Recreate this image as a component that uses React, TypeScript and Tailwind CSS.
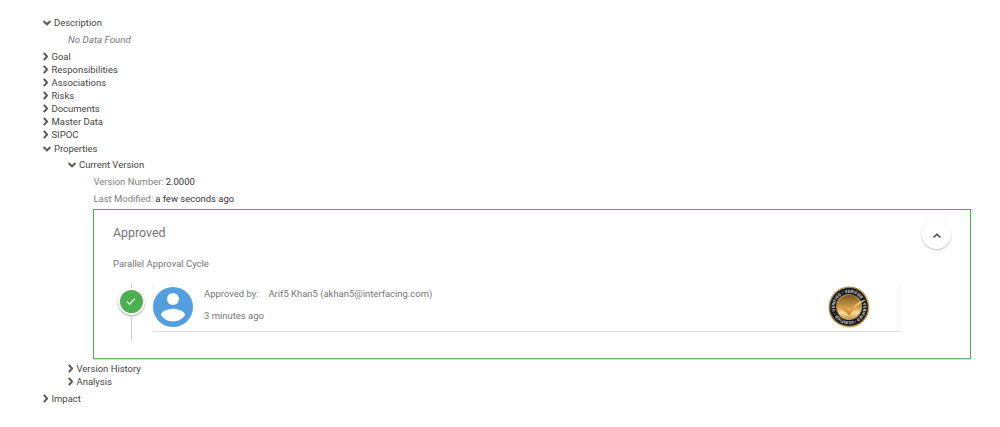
import type { ReactNode } from "react";

function Chevron({ open }: { open?: boolean }) {
  return open ? (
    <svg className="mr-[3.500px] h-[6px] w-[8px] shrink-0" viewBox="0 0 8 6" fill="none" stroke="#5c5c5c" strokeWidth="2">
      <path d="M.5 1.100 4 4.300 7.500 1.100" />
    </svg>
  ) : (
    <svg className="mr-[3.500px] h-[9px] w-[5.500px] shrink-0" viewBox="0 0 5.5 9" fill="none" stroke="#5c5c5c" strokeWidth="2.100">
      <path d="M.8 .9 4.100 4.500 .8 8.100" />
    </svg>
  );
}

function Row({ label, open }: { label: string; open?: boolean }) {
  return (
    <div className="flex h-[13px] items-center whitespace-nowrap text-[#444]">
      <Chevron open={open} />
      {label}
    </div>
  );
}

function Field({ label, children }: { label: string; children: ReactNode }) {
  return (
    <div className="flex h-[17px] items-center gap-[2px] whitespace-nowrap pl-[0.500px] text-[#333]">
      <span className="text-[#808080]">{label}</span>
      {children}
    </div>
  );
}

function Avatar() {
  return (
    <svg className="size-10 shrink-0" viewBox="0 0 40 40">
      <circle cx="20" cy="20" r="20" fill="#539fde" />
      <circle cx="20" cy="12" r="6" fill="#fff" />
      <path d="M8 28c0-4 8-6.200 12-6.200S32 24 32 28c-2.600 3.900-7 6.400-12 6.400S10.600 31.900 8 28Z" fill="#fff" />
    </svg>
  );
}

function Seal() {
  return (
    <svg className="size-[42px]" viewBox="0 0 42 42">
      <defs>
        <linearGradient id="rim" x1="0" y1="0" x2="1" y2="1">
          <stop offset="0" stopColor="#e8cb83" />
          <stop offset=".35" stopColor="#8c6a30" />
          <stop offset=".65" stopColor="#d9b865" />
          <stop offset="1" stopColor="#9b7130" />
        </linearGradient>
        <linearGradient id="disc" x1="0" y1="0" x2="0" y2="1">
          <stop offset="0" stopColor="#80551d" />
          <stop offset=".5" stopColor="#c89b4b" />
          <stop offset=".75" stopColor="#f6df9b" />
          <stop offset="1" stopColor="#c79547" />
        </linearGradient>
        <linearGradient id="tick" x1="0" y1="1" x2="1" y2="0">
          <stop offset="0" stopColor="#c57a25" />
          <stop offset=".5" stopColor="#e9a44c" />
          <stop offset="1" stopColor="#ffe2a6" />
        </linearGradient>
        <path id="ring" d="M21 35.200a14.200 14.200 0 1 1 .01 0" />
      </defs>
      <circle cx="21" cy="21" r="20.500" fill="url(#rim)" />
      <circle cx="21" cy="21" r="19" fill="#17191c" />
      <text fill="#d8d8d8" fontSize="4.200" fontWeight="700" fontFamily="Roboto, sans-serif" transform="rotate(-18 21 21)">
        <textPath href="#ring" textLength="88" startOffset="0">
          VERIFIED • VERIFIED • VERIFIED • VERIFIED •
        </textPath>
      </text>
      <circle cx="21" cy="21" r="13" fill="url(#rim)" />
      <circle cx="21" cy="21" r="12" fill="url(#disc)" />
      <path d="M12 20.500h5l4 4.800C25 19.500 30 15.500 38.500 13.500 31 17.500 25.500 23 21.500 29.800Z" fill="url(#tick)" />
    </svg>
  );
}

function ApprovalCard() {
  return (
    <section className="mt-[2px] h-[150px] w-[878px] border border-[#4aa74c] border-b-[#68b56a] pl-[19px] pr-[18px] shadow-[0_1px_0_#c9e6ca] text-[#757575]">
      <div className="flex h-[45px] items-start justify-between">
        <h2 className="mt-[15px] text-[12.400px] leading-4">Approved</h2>
        <button className="mr-[1px] mt-[10px] flex size-[29px] items-center justify-center rounded-full bg-white shadow-[0_1px_2px_rgba(0,0,0,0.26)]" aria-label="Collapse">
          <svg className="size-[8px]" viewBox="0 0 8 8" fill="none" stroke="#424242" strokeWidth="1.500">
            <path d="M.5 6.500 4 3.200 7.500 6.500" />
          </svg>
        </button>
      </div>
      <p className="mt-[1px] flex h-4 items-center">Parallel Approval Cycle</p>
      <div className="mt-[11px] flex">
        <div className="flex h-[58px] w-[36px] flex-col items-center">
          <div className="h-[5px] w-px bg-[#ccc]" />
          <div className="flex size-[27px] shrink-0 items-center justify-center rounded-full border-2 border-white bg-[#4caf50] shadow-[0_1px_2px_rgba(0,0,0,0.35)]">
            <svg className="h-[7px] w-[10px]" viewBox="0 0 11 8" fill="none" stroke="#fff" strokeWidth="1.300">
              <path d="M.8 4 3.900 7 10 .7" />
            </svg>
          </div>
          <div className="w-px grow bg-[#ccc]" />
        </div>
        <div className="ml-[3px] flex h-[49px] w-[748px] border-r border-b border-l border-x-[#f6f6f6] border-b-[#dedede]">
          <div className="mt-[4px]"><Avatar /></div>
          <div className="ml-[11px] grow">
            <div className="flex h-[22px] items-center whitespace-pre">Approved by:<span className="ml-[10px]">Arif5 Khan5 (akhan5@interfacing.com)</span></div>
            <div className="flex h-[22px] items-center">3 minutes ago</div>
          </div>
          <div className="mr-[29.500px] mt-[3px]"><Seal /></div>
        </div>
      </div>
    </section>
  );
}

export default function App() {
  return (
    <main className="h-[427px] w-[1000px] overflow-hidden bg-white pl-[42.500px] pt-[16px] font-['Roboto',sans-serif] text-[9.460px] leading-none">
      <Row label="Description" open />
      <p className="flex h-[21px] items-center pl-[25.500px] text-[9.750px] italic text-[#777]">No Data Found</p>
      <Row label="Goal" />
      <Row label="Responsibilities" />
      <Row label="Associations" />
      <Row label="Risks" />
      <Row label="Documents" />
      <Row label="Master Data" />
      <Row label="SIPOC" />
      <div className="pt-[1px]">
        <Row label="Properties" open />
      </div>
      <div className="pl-[25px] pt-[3px]">
        <Row label="Current Version" open />
        <div className="pl-[25.500px] pt-[2px]">
          <Field label="Version Number:">2.0000</Field>
          <Field label="Last Modified:">a few seconds ago</Field>
          <ApprovalCard />
        </div>
        <div className="pt-[3px]">
          <Row label="Version History" />
          <Row label="Analysis" />
        </div>
      </div>
      <div className="pt-[4px]">
        <Row label="Impact" />
      </div>
    </main>
  );
}
